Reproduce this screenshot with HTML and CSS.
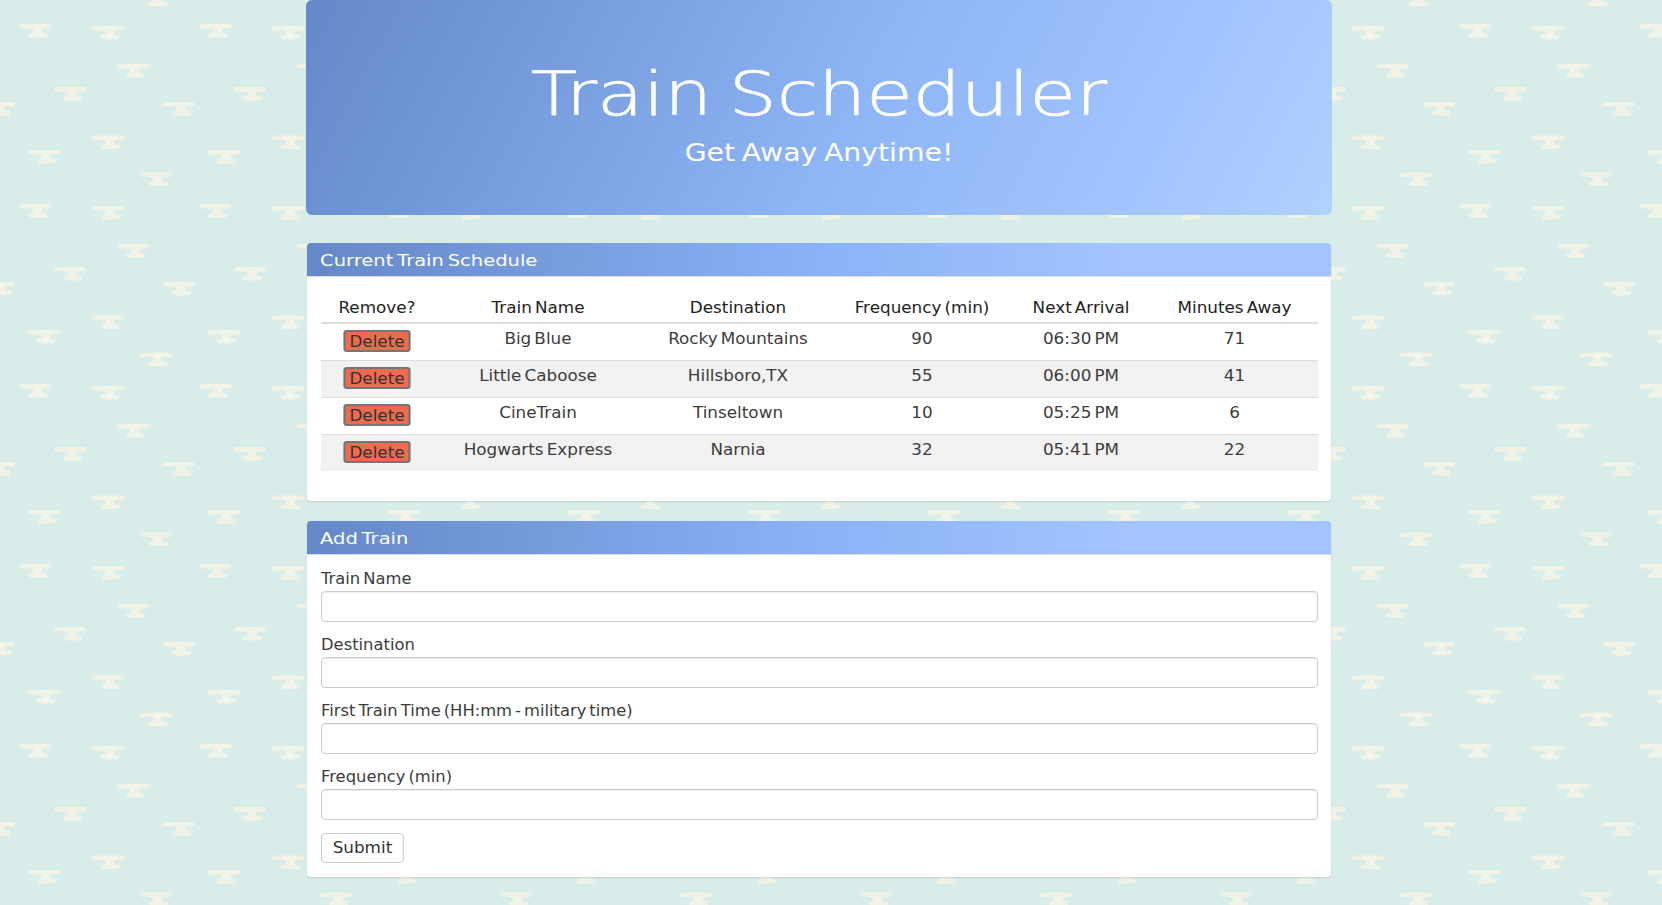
FILE: index.html
```html
<!DOCTYPE html>
<html lang="en">
<head>
    <meta charset="UTF-8">
    <title>Train Scheduler</title>
    <link rel="stylesheet" href="styles.css">
</head>
<body>
    <div class="container">
        <div class="jumbotron">
            <h1>Train Scheduler</h1>
            <p>Get Away Anytime!</p>
        </div>

        <div class="panel schedule">
            <div class="panel-heading"><span>Current Train Schedule</span></div>
            <div class="panel-body">
                <table>
                    <colgroup>
                        <col class="col-remove">
                        <col class="col-name">
                        <col class="col-dest">
                        <col class="col-freq">
                        <col class="col-next">
                        <col class="col-away">
                    </colgroup>
                    <thead>
                        <tr>
                            <th>Remove?</th>
                            <th>Train Name</th>
                            <th>Destination</th>
                            <th>Frequency (min)</th>
                            <th>Next Arrival</th>
                            <th>Minutes Away</th>
                        </tr>
                    </thead>
                    <tbody>
                        <tr>
                            <td><button class="delete">Delete</button></td>
                            <td>Big Blue</td>
                            <td>Rocky Mountains</td>
                            <td>90</td>
                            <td>06:30 PM</td>
                            <td>71</td>
                        </tr>
                        <tr>
                            <td><button class="delete">Delete</button></td>
                            <td>Little Caboose</td>
                            <td>Hillsboro,TX</td>
                            <td>55</td>
                            <td>06:00 PM</td>
                            <td>41</td>
                        </tr>
                        <tr>
                            <td><button class="delete">Delete</button></td>
                            <td>CineTrain</td>
                            <td>Tinseltown</td>
                            <td>10</td>
                            <td>05:25 PM</td>
                            <td>6</td>
                        </tr>
                        <tr>
                            <td><button class="delete">Delete</button></td>
                            <td>Hogwarts Express</td>
                            <td>Narnia</td>
                            <td>32</td>
                            <td>05:41 PM</td>
                            <td>22</td>
                        </tr>
                    </tbody>
                </table>
            </div>
        </div>

        <div class="panel">
            <div class="panel-heading"><span>Add Train</span></div>
            <form class="panel-body add-form">
                <div class="form-group">
                    <label for="name">Train Name</label>
                    <input id="name" type="text">
                </div>
                <div class="form-group">
                    <label for="dest">Destination</label>
                    <input id="dest" type="text">
                </div>
                <div class="form-group">
                    <label for="first">First Train Time (HH:mm - military time)</label>
                    <input id="first" type="text">
                </div>
                <div class="form-group">
                    <label for="freq">Frequency (min)</label>
                    <input id="freq" type="text">
                </div>
                <button class="submit" type="button">Submit</button>
            </form>
        </div>
    </div>
</body>
</html>
```

FILE: styles.css
```css
* {
    box-sizing: border-box;
}

body {
    margin: 0;
    padding-right: 24px;
    color: #3c3c3c;
    font-family: "DejaVu Sans", sans-serif;
    font-size: 15px;
    word-spacing: -2px;
    background-color: #d8ecea;
    background-size: 180px 180px;
    background-image: url("data:image/svg+xml,%3Csvg xmlns='http://www.w3.org/2000/svg' width='180' height='180'%3E%3Cdefs%3E%3Cg id='s' fill='%23f1f3e6'%3E%3Crect x='0' y='0' width='32' height='4.5' rx='2.2'/%3E%3Crect x='9' y='9' width='19' height='4.5' rx='2.2'/%3E%3Crect x='13.5' y='3' width='9' height='7'/%3E%3C/g%3E%3C/defs%3E%3Cuse href='%23s' x='19.5' y='24'/%3E%3Cuse href='%23s' x='92' y='26'/%3E%3Cuse href='%23s' x='117' y='64'/%3E%3Cuse href='%23s' x='54' y='87'/%3E%3Cuse href='%23s' x='163' y='102'/%3E%3Cuse href='%23s' x='-17' y='102'/%3E%3Cuse href='%23s' x='92' y='135.5'/%3E%3Cuse href='%23s' x='28' y='150'/%3E%3Cuse href='%23s' x='140' y='172.5'/%3E%3Cuse href='%23s' x='140' y='-7.5'/%3E%3C/svg%3E");
}

.container {
    width: 1026px;
    margin: 0 auto;
    padding-bottom: 28px;
}

.jumbotron {
    height: 215px;
    margin-bottom: 28px;
    padding-top: 56px;
    border-radius: 6px;
    color: white;
    text-align: center;
    background: linear-gradient(118deg, #6488c8, #8fb6f7 55%, #a5c6ff 85%, #b0d2ff);
}

/* no wide font here, so the text gets stretched */
.jumbotron h1 {
    margin: 0;
    font-family: "DejaVu Sans ExtraLight", "DejaVu Sans", sans-serif;
    font-size: 60px;
    font-weight: 200;
    line-height: 76px;
    word-spacing: -6px;
    -webkit-text-stroke: 0.7px white;
    transform: scaleX(1.26);
}

.jumbotron p {
    margin: 5px 0 0;
    font-size: 24px;
    line-height: 32px;
    transform: scaleX(1.18);
}

.panel {
    margin: 0 1px 20px;
    border-radius: 4px;
    background: white;
    box-shadow: 0 1px 2px rgba(0, 0, 0, 0.12);
    overflow: hidden;
}

.panel-heading {
    height: 34px;
    padding: 0 14px 0 13px;
    color: white;
    font-size: 16px;
    line-height: 35px;
    border-bottom: 1px solid #ddd;
    background: linear-gradient(92deg, #6488c8, #8bb2f6 50%, #a3c4ff 80%);
}

.panel-heading span {
    display: inline-block;
    transform: scaleX(1.22);
    transform-origin: left;
}

.panel-body {
    padding: 14px;
}

.schedule .panel-body {
    height: 224px;
}

table {
    width: 997px;
    border-collapse: collapse;
    table-layout: fixed;
}

.col-remove { width: 112px; }
.col-name { width: 210px; }
.col-dest { width: 190px; }
.col-freq { width: 178px; }
.col-next { width: 140px; }
.col-away { width: 167px; }

th {
    height: 32px;
    padding: 3px 0 0;
    color: #222;
    font-weight: normal;
    text-align: center;
    border-bottom: 2px solid #ddd;
    transform: scaleX(1.12);
}

td {
    height: 37px;
    padding: 6px 0 0;
    text-align: center;
    vertical-align: top;
    border-top: 1px solid #ddd;
    transform: scaleX(1.12);
}

thead + tbody tr:first-child td {
    border-top: 0;
}

tbody tr:nth-child(even) {
    background: #f2f2f2;
}

.delete {
    width: 60px;
    height: 22px;
    padding: 1px 0 0;
    color: #333;
    font-family: inherit;
    font-size: 15px;
    line-height: 18px;
    background: #ee6b4f;
    border: 2px solid #767676;
    border-radius: 3px;
}

.add-form {
    padding-top: 14px;
    padding-right: 13px;
}

.form-group {
    margin-bottom: 13px;
}

label {
    display: block;
    height: 20px;
    margin-bottom: 2px;
    line-height: 20px;
    transform: scaleX(1.09);
    transform-origin: left;
}

input {
    display: block;
    width: 100%;
    height: 31px;
    border: 1px solid #ccc;
    border-radius: 4px;
    box-shadow: inset 0 1px 1px rgba(0, 0, 0, 0.075);
}

.submit {
    display: block;
    width: 74px;
    height: 30px;
    padding: 0;
    color: #333;
    font-family: inherit;
    font-size: 15px;
    background: white;
    border: 1px solid #ccc;
    border-radius: 4px;
    transform: scaleX(1.12);
    transform-origin: left;
}
```
